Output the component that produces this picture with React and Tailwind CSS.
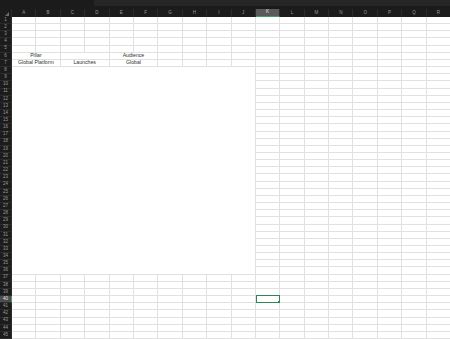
import React from "react";

const COLS = "ABCDEFGHIJKLMNOPQR".split("");

function BodyCells() {
  const cells = [];
  for (let r = 1; r <= 45; r++) {
    const sel = r === 40;
    cells.push(
      <div
        key={`h${r}`}
        className={
          "flex items-center justify-center border-b border-[#2c2c2c] text-[4.5px] leading-none " +
          (sel
            ? "bg-[#4d4d4d] text-[#e0e0e0] border-r border-r-[#3f9a63]"
            : "bg-[#1c1c1c] text-[#9a9a9a] border-r border-r-[#2c2c2c]")
        }
      >
        {r}
      </div>
    );
    for (let c = 0; c < 18; c++) {
      // blank area A8:J36
      if (r >= 8 && r <= 36 && c < 10) {
        if (r === 8 && c === 0) {
          cells.push(
            <div
              key={`blank`}
              className="col-span-10 row-span-29 bg-white border-r border-b border-[#e1e1e1]"
            />
          );
        }
        continue;
      }
      if ((r === 6 || r === 7) && (c === 0 || c === 2 || c === 4)) {
        let text = "";
        if (r === 6 && c === 0) text = "Pillar";
        if (r === 6 && c === 4) text = "Audience";
        if (r === 7 && c === 0) text = "Global Platform";
        if (r === 7 && c === 2) text = "Launches";
        if (r === 7 && c === 4) text = "Global";
        cells.push(
          <div
            key={`c${r}-${c}`}
            className="col-span-2 flex items-center justify-center bg-white border-r border-b border-[#e1e1e1] text-[5.2px] leading-none text-[#333]"
          >
            {text}
          </div>
        );
        continue;
      }
      if ((r === 6 || r === 7) && (c === 1 || c === 3 || c === 5)) continue;
      const isSel = r === 40 && c === 10;
      cells.push(
        <div
          key={`c${r}-${c}`}
          className="relative bg-white border-r border-b border-[#e1e1e1]"
        >
          {isSel && (
            <span className="absolute left-0 top-[-1px] right-[-1px] bottom-[-1px] border border-[#2f8553]">
              <span className="absolute right-[-2px] bottom-[-2px] w-[3px] h-[3px] bg-[#2f8553]" />
            </span>
          )}
        </div>
      );
    }
  }
  return cells;
}

export default function App() {
  return (
    <div
      className="w-[450px] h-[339px] overflow-hidden bg-white"
      style={{ fontFamily: '"Liberation Sans", Arial, sans-serif' }}
    >
      <div className="h-[9px] bg-[#1b1b1b] flex">
        <div className="w-[94px]" />
        <div className="flex-1 h-[6px] bg-[#262626]" />
      </div>
      <div className="h-[8px] grid grid-cols-[12px_repeat(18,24.4px)] bg-[#1c1c1c]">
        <div className="relative border-r border-[#2c2c2c]">
          <span className="absolute right-[2px] bottom-[1px] w-0 h-0 border-l-[4px] border-l-transparent border-b-[4px] border-b-[#6a6a6a]" />
        </div>
        {COLS.map((l, i) => (
          <div
            key={l}
            className={
              "flex items-center justify-center text-[4.5px] leading-none " +
              (i === 10
                ? "bg-[#5a5a5a] text-[#e0e0e0] border-b border-b-[#3f9a63] border-r border-r-[#2c2c2c]"
                : "text-[#9a9a9a] border-r border-r-[#2c2c2c]")
            }
          >
            {l}
          </div>
        ))}
      </div>
      <div className="grid grid-cols-[12px_repeat(18,24.4px)] grid-rows-[repeat(45,7.16px)]">
        <BodyCells />
      </div>
    </div>
  );
}
